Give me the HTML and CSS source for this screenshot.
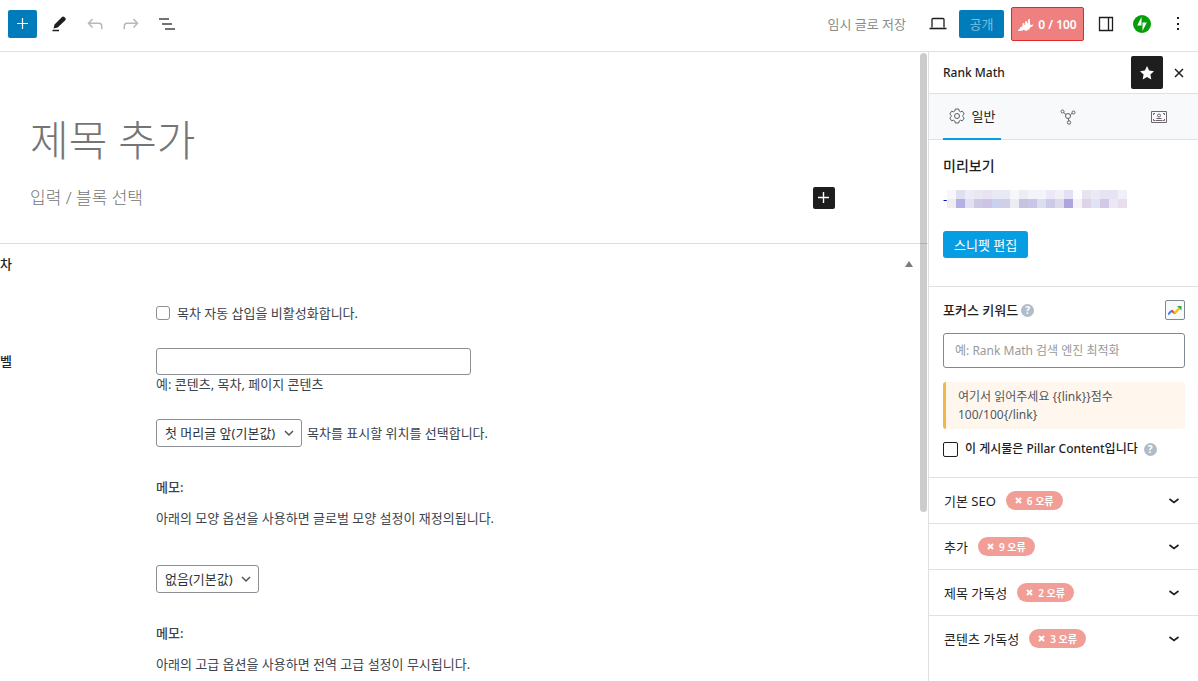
FILE: index.html
```html
<!DOCTYPE html>
<html lang="ko">

<head>
    <meta charset="UTF-8">
    <meta name="viewport" content="width=device-width, initial-scale=1.0">
    <title>새 글 추가</title>

    <link rel="stylesheet" href="styles.css">

</head>

<body>
    <header class="topbar">
        <div class="tools">
            <button class="add-btn" aria-label="블록 삽입">
                <svg width="24" height="24" viewBox="0 0 24 24"><path d="M11.500 6v11M6 11.500h11" stroke="#fff" stroke-width="1.200"/></svg>
            </button>
            <button class="icon-btn" aria-label="도구">
                <svg width="24" height="24" viewBox="0 0 24 24"><path d="M6.500 16.500l1-4 7.500-7.500a1.600 1.600 0 0 1 2.300 0l1 1a1.600 1.600 0 0 1 0 2.200l-7.600 7.300z" fill="#1e1e1e"/><path d="M5.500 18.500h6.500" stroke="#1e1e1e" stroke-width="1.500"/></svg>
            </button>
            <button class="icon-btn off" aria-label="실행 취소" disabled>
                <svg width="24" height="24" viewBox="0 0 24 24"><path d="M9.500 7l-4 4.200 4 4.200M5.500 11.200h10.500q2.700 0 2.700 3v3" /></svg>
            </button>
            <button class="icon-btn off" aria-label="다시 실행" disabled>
                <svg width="24" height="24" viewBox="0 0 24 24"><path d="M14.500 7l4 4.200-4 4.200M18.500 11.200h-10.500q-2.700 0-2.700 3v3" /></svg>
            </button>
            <button class="icon-btn" aria-label="문서 개요">
                <svg width="24" height="24" viewBox="0 0 24 24"><path d="M4 7h10M7 12h10M10 17h10" stroke="#444" stroke-width="1.600"/></svg>
            </button>
        </div>
        <div class="actions">
            <button class="draft">임시 글로 저장</button>
            <button class="icon-btn" aria-label="보기">
                <svg width="24" height="24" viewBox="0 0 24 24"><path d="M6 15.500v-8q0-1 1-1h10q1 0 1 1v8" fill="none" stroke="#1e1e1e" stroke-width="1.300"/><path d="M3.500 16.500h17" stroke="#1e1e1e" stroke-width="1.600"/></svg>
            </button>
            <button class="publish">공개</button>
            <button class="score">
                <svg width="16" height="14" viewBox="0 0 16 14"><path d="M0 12q2-1 2.500-3l2-.5V5.500l1.800-.5v2l.9-.3V3.500l2-.5v2.500l.8-.3V1.500l2-.5v6l3.500-.5q-.5 2-3 2.500-.5 2.500-3.500 3.500-2 .5-3-.7-1.500 1.200-6 1.200z" fill="#fff"/></svg>
                <span>0 / 100</span>
            </button>
            <button class="icon-btn" aria-label="설정">
                <svg width="24" height="24" viewBox="0 0 24 24"><path d="M5.500 5.500h13v13h-13zM14.500 5.500v13" fill="none" stroke="#1e1e1e" stroke-width="1.300"/></svg>
            </button>
            <button class="icon-btn" aria-label="Jetpack">
                <svg width="20" height="20" viewBox="0 0 20 20"><circle cx="10" cy="10" r="9" fill="#069e08"/><path d="M9.500 3v8.500h-4.300zM10.500 17v-8.500h4.300z" fill="#fff"/></svg>
            </button>
            <button class="icon-btn" aria-label="옵션">
                <svg width="24" height="24" viewBox="0 0 24 24"><path d="M11 5h2v2h-2zM11 11h2v2h-2zM11 16h2v2h-2z" fill="#1e1e1e"/></svg>
            </button>
        </div>
    </header>

    <div class="editor">
        <main class="content">
            <section class="canvas">
                <h1>제목 추가</h1>
                <div class="block-row">
                    <p>입력 / 블록 선택</p>
                    <button class="block-add" aria-label="블록 추가">
                        <svg width="22" height="22" viewBox="0 0 22 22"><path d="M10.500 5v11M5 10.500h11" stroke="#fff" stroke-width="1.400"/></svg>
                    </button>
                </div>
            </section>

            <section class="metabox">
                <div class="meta-head">
                    <h2>차</h2>
                    <button aria-label="접기"><svg width="8" height="6" viewBox="0 0 8 6"><path d="M4 0l4 6H0z" fill="#787c82"/></svg></button>
                </div>
                <div class="meta-row">
                    <span></span>
                    <label class="check"><input type="checkbox">목차 자동 삽입을 비활성화합니다.</label>
                </div>
                <div class="meta-row">
                    <label class="row-name" for="heading">벨</label>
                    <div>
                        <input type="text" id="heading" class="text-input">
                        <p class="desc">예: 콘텐츠, 목차, 페이지 콘텐츠</p>
                    </div>
                </div>
                <div class="meta-row">
                    <span></span>
                    <div class="select-line">
                        <select id="position" class="select"><option>첫 머리글 앞(기본값)</option></select>
                        <label for="position">목차를 표시할 위치를 선택합니다.</label>
                    </div>
                </div>
                <div class="meta-row">
                    <span></span>
                    <div class="memo">
                        <strong>메모:</strong>
                        <p>아래의 모양 옵션을 사용하면 글로벌 모양 설정이 재정의됩니다.</p>
                    </div>
                </div>
                <div class="meta-row">
                    <span></span>
                    <select class="select" aria-label="정렬"><option>없음(기본값)</option></select>
                </div>
                <div class="meta-row">
                    <span></span>
                    <div class="memo">
                        <strong>메모:</strong>
                        <p>아래의 고급 옵션을 사용하면 전역 고급 설정이 무시됩니다.</p>
                    </div>
                </div>
            </section>
            <div class="scroll-thumb"></div>
        </main>

        <aside class="sidebar">
            <div class="side-head">
                <h2>Rank Math</h2>
                <button class="star" aria-label="고정">
                    <svg width="24" height="24" viewBox="0 0 24 24"><path d="M12 5l2.100 4.600 4.900.6-3.600 3.400.9 4.900-4.300-2.400-4.300 2.400.9-4.900L5 10.200l4.900-.6z" fill="#fff"/></svg>
                </button>
                <button aria-label="닫기">
                    <svg width="10" height="10" viewBox="0 0 10 10"><path d="M1 1l8 8M9 1l-8 8" stroke="#1e1e1e" stroke-width="1.500"/></svg>
                </button>
            </div>

            <nav class="tabs">
                <button class="tab active">
                    <svg width="16" height="16" viewBox="0 0 16 16"><path d="M6.300 1h3.400l.5 2 1.300.8 2-.6 1.700 2.900-1.500 1.400v1l1.500 1.400-1.700 2.900-2-.6-1.300.8-.5 2H6.300l-.5-2-1.300-.8-2 .6L.8 9.900l1.500-1.400v-1L.8 6.100l1.700-2.900 2 .6L5.800 3z"/><circle cx="8" cy="8" r="2.500"/></svg>
                    일반
                </button>
                <button class="tab" aria-label="스키마">
                    <svg width="16" height="16" viewBox="0 0 16 16"><circle cx="2.500" cy="2.500" r="1.500"/><circle cx="13.500" cy="3.500" r="1.500"/><circle cx="8" cy="7" r="2.500"/><circle cx="9" cy="13.500" r="1.700"/><path d="M3.600 3.500L6 5.500M12.200 4.200L10.300 6M8.300 9.500l.4 2.300"/></svg>
                </button>
                <button class="tab social" aria-label="소셜">
                    <svg width="16" height="14" viewBox="0 0 16 14"><path d="M.5 1.500h15v11H.5zM2.500 5V3.500H4M12 3.500h1.500V5M2.500 9v1.500H4M12 10.500h1.500V9M4.500 10.500h7M5.500 8.500h5"/><circle cx="8" cy="5.500" r="1.500"/></svg>
                </button>
            </nav>

            <section class="preview">
                <h3>미리보기</h3>
                <div class="snippet">
                    <span>-</span>
                    <svg width="180" height="18" viewBox="0 0 20 2" preserveAspectRatio="none" shape-rendering="crispEdges" stroke-width="1">
                        <path d="M0 .5h1" stroke="#f7f6fc"/><path d="M1 .5h1" stroke="#dce0f1"/><path d="M2 .5h1" stroke="#ecebf6"/><path d="M3 .5h1" stroke="#e9e7f2"/><path d="M4 .5h1" stroke="#e9e2f1"/><path d="M5 .5h2" stroke="#e7e9f5"/><path d="M7 .5h1" stroke="#f6f7fb"/><path d="M8 .5h1" stroke="#ecedf2"/><path d="M9 .5h2" stroke="#f3f4f9"/><path d="M11 .5h1" stroke="#ebe9f7"/><path d="M12 .5h1" stroke="#f0f0f7"/><path d="M13 .5h1" stroke="#e3e0f4"/><path d="M14 .5h1" stroke="#fdfdfe"/><path d="M15 .5h1" stroke="#e7e3f1"/><path d="M16 .5h1" stroke="#eae9f5"/><path d="M17 .5h2" stroke="#e6e4f2"/><path d="M19 .5h1" stroke="#f2eff8"/>
                        <path d="M0 1.500h1" stroke="#efecf2"/><path d="M1 1.500h1" stroke="#b2b1e1"/><path d="M2 1.500h1" stroke="#e3e1f1"/><path d="M3 1.500h1" stroke="#cdc9e2"/><path d="M4 1.500h1" stroke="#cec2e5"/><path d="M5 1.500h1" stroke="#cad1ef"/><path d="M6 1.500h1" stroke="#cfd0e8"/><path d="M7 1.500h1" stroke="#eeebf2"/><path d="M8 1.500h1" stroke="#c4c4df"/><path d="M9 1.500h1" stroke="#cac5e7"/><path d="M10 1.500h1" stroke="#dadef1"/><path d="M11 1.500h1" stroke="#cfc9e9"/><path d="M12 1.500h1" stroke="#dddbea"/><path d="M13 1.500h1" stroke="#aea4df"/><path d="M14 1.500h1" stroke="#f7f2f9"/><path d="M15 1.500h1" stroke="#ddd4e8"/><path d="M16 1.500h1" stroke="#dfe3f3"/><path d="M17 1.500h1" stroke="#d3c8e6"/><path d="M18 1.500h1" stroke="#eae8f5"/><path d="M19 1.500h1" stroke="#e8deee"/>
                    </svg>
                </div>
                <button class="edit-snippet">스니펫 편집</button>
            </section>

            <section class="keyword">
                <div class="keyword-head">
                    <label for="focus">포커스 키워드</label>
                    <span class="help">?</span>
                    <button class="trends" aria-label="트렌드">
                        <svg width="14" height="12" viewBox="0 0 14 12" fill="none" stroke-width="2"><path d="M0 10.500l4-4" stroke="#4285f4"/><path d="M3.500 6.500l3.500 3" stroke="#ea4335"/><path d="M6.500 9.500l4.500-5" stroke="#fbbc04"/><path d="M9 2h4.500v4.500z" fill="#34a853"/></svg>
                    </button>
                </div>
                <input type="text" id="focus" class="focus-input" placeholder="예: Rank Math 검색 엔진 최적화">
                <p class="notice">여기서 읽어주세요 {{link}}점수 100/100{/link}</p>
                <div class="pillar">
                    <label><input type="checkbox">이 게시물은 Pillar Content입니다</label>
                    <span class="help">?</span>
                </div>
            </section>

            <button class="panel">기본 SEO <span class="badge"><svg width="7" height="7" viewBox="0 0 7 7"><path d="M1 1l5 5M6 1L1 6"/></svg>6 오류</span><svg class="chevron" width="12" height="8" viewBox="0 0 12 8"><path d="M1.500 2L6 5.500 10.500 2"/></svg></button>
            <button class="panel">추가 <span class="badge"><svg width="7" height="7" viewBox="0 0 7 7"><path d="M1 1l5 5M6 1L1 6"/></svg>9 오류</span><svg class="chevron" width="12" height="8" viewBox="0 0 12 8"><path d="M1.500 2L6 5.500 10.500 2"/></svg></button>
            <button class="panel">제목 가독성 <span class="badge"><svg width="7" height="7" viewBox="0 0 7 7"><path d="M1 1l5 5M6 1L1 6"/></svg>2 오류</span><svg class="chevron" width="12" height="8" viewBox="0 0 12 8"><path d="M1.500 2L6 5.500 10.500 2"/></svg></button>
            <button class="panel">콘텐츠 가독성 <span class="badge"><svg width="7" height="7" viewBox="0 0 7 7"><path d="M1 1l5 5M6 1L1 6"/></svg>3 오류</span><svg class="chevron" width="12" height="8" viewBox="0 0 12 8"><path d="M1.500 2L6 5.500 10.500 2"/></svg></button>
        </aside>
    </div>
</body>

</html>
```
FILE: styles.css
```css
* {
    box-sizing: border-box;
    margin: 0;
    padding: 0;
}

body {
    display: flex;
    flex-direction: column;
    height: 100vh;
    overflow: hidden;
    font-family: "Noto Sans", "Noto Sans CJK KR", sans-serif;
    font-size: 13px;
    line-height: 18px;
    color: #3c434a;
    background: #fff;
}

button,
input,
select {
    font: inherit;
    color: inherit;
}

button {
    display: flex;
    align-items: center;
    justify-content: center;
    border: 0;
    background: none;
}

/* top bar */
.topbar {
    display: flex;
    justify-content: space-between;
    flex-shrink: 0;
    height: 52px;
    padding: 0 8px;
    border-bottom: 1px solid #e0e0e0;
}

.tools,
.actions {
    display: flex;
    align-items: center;
    gap: 12px;
    height: 48px;
}

.add-btn {
    width: 29px;
    height: 28px;
    margin-right: -2px;
    border-radius: 2px;
    background: #007cba;
}

.icon-btn {
    width: 24px;
    height: 24px;
}

.off path {
    fill: none;
    stroke: #b8b8b8;
    stroke-width: 1.5;
}

.draft {
    margin-right: 8px;
    color: #8a8a8a;
}

.publish {
    width: 45px;
    height: 28px;
    margin-left: -3px;
    border-radius: 2px;
    color: #7fbddc;
    background: #007cba;
}

.score {
    gap: 4px;
    width: 73px;
    height: 34px;
    margin-left: -5px;
    margin-right: -2px;
    padding-top: 2px;
    border: 1px solid #e02a2a;
    border-radius: 2px;
    font-size: 12px;
    font-weight: 600;
    color: #fff;
    background: #ee8080;
}

/* layout */
.editor {
    display: flex;
    flex: 1;
    min-height: 0;
}

.content {
    position: relative;
    flex: 1;
    overflow: hidden;
}

.scroll-thumb {
    position: absolute;
    top: 1px;
    right: 1px;
    width: 7px;
    height: 459px;
    border-radius: 4px;
    background: rgba(0, 0, 0, .2);
}

.canvas {
    height: 192px;
    padding: 60px 93px 0 30px;
    border-bottom: 1px solid #ddd;
    font-weight: 300;
    color: #757575;
}

.canvas h1 {
    font-size: 42px;
    font-weight: 300;
    line-height: 56px;
}

.block-row {
    display: flex;
    align-items: center;
    justify-content: space-between;
    margin-top: 19px;
    font-size: 17px;
}

.block-add {
    width: 22px;
    height: 22px;
    border-radius: 2px;
    background: #1e1e1e;
}

/* meta box */
.meta-head {
    display: flex;
    align-items: center;
    justify-content: space-between;
    height: 39px;
    padding-right: 15px;
}

.meta-head h2 {
    font-size: 13px;
    font-weight: 500;
    color: #1d2327;
}

.meta-row {
    display: grid;
    grid-template-columns: 156px 1fr;
    justify-items: start;
    margin-bottom: 26px;
}

.meta-head + .meta-row {
    margin-top: 21px;
}

.row-name {
    margin-top: 4px;
    font-weight: 500;
    color: #1d2327;
}

.check {
    display: flex;
    align-items: center;
    gap: 7px;
}

input[type="checkbox"] {
    appearance: none;
    width: 14px;
    height: 14px;
    border: 1px solid #8c8f94;
    border-radius: 3px;
    background: #fff;
}

.text-input {
    display: block;
    width: 315px;
    height: 27px;
    padding: 0 8px;
    border: 1px solid #8c8f94;
    border-radius: 3px;
}

.select-line {
    display: flex;
    align-items: center;
    gap: 5px;
}

.select {
    appearance: none;
    height: 28px;
    padding: 0 25px 0 8px;
    border: 1px solid #8c8f94;
    border-radius: 3px;
    color: #2c3338;
    background: #fff url("data:image/svg+xml,%3Csvg xmlns='http://www.w3.org/2000/svg' width='10' height='7'%3E%3Cpath d='M1 1l4 4 4-4' fill='none' stroke='%23555' stroke-width='1.5'/%3E%3C/svg%3E") no-repeat right 7px center;
}

.memo {
    display: grid;
    gap: 13px;
    margin: 5px 0 12px;
}

.memo strong {
    font-weight: 500;
}

/* sidebar */
.sidebar {
    width: 270px;
    border-left: 1px solid #e0e0e0;
    color: #1e1e1e;
}

.side-head {
    display: flex;
    align-items: center;
    height: 42px;
    padding: 0 14px;
    border-bottom: 1px solid #e0e0e0;
}

.side-head h2 {
    flex: 1;
    font-size: 12px;
    font-weight: 500;
}

.star {
    width: 32px;
    height: 33px;
    margin-right: 11px;
    border-radius: 2px;
    background: #1e1e1e;
}

.tabs {
    display: flex;
    justify-content: space-between;
    height: 46px;
    padding: 0 14px;
    border-bottom: 1px solid #e0e0e0;
    background: #f8f9fa;
}

.tab {
    gap: 7px;
    width: 50px;
    height: 46px;
}

.tab.active {
    width: 58px;
    border-bottom: 2px solid #069de3;
}

.tab svg {
    fill: none;
    stroke: #5c6066;
}

.tab.social svg {
    stroke: #6e6670;
}

.preview {
    height: 147px;
    padding: 16px 14px 0;
    border-bottom: 1px solid #e0e0e0;
}

.preview h3 {
    font-size: 14px;
    font-weight: 500;
    line-height: 20px;
}

.snippet {
    display: flex;
    align-items: center;
    margin-top: 14px;
    color: #1a0dab;
}

.edit-snippet {
    height: 27px;
    margin-top: 23px;
    padding: 0 11px;
    border-radius: 3px;
    color: #fff;
    background: #069de3;
}

.keyword {
    height: 190px;
    padding: 13px 13px 0 14px;
}

.keyword-head {
    display: flex;
    align-items: center;
    gap: 3px;
    font-weight: 500;
}

.help {
    width: 13px;
    height: 13px;
    border-radius: 50%;
    font-size: 10px;
    font-weight: 700;
    line-height: 13px;
    text-align: center;
    color: #fff;
    background: #b0bcc8;
}

.trends {
    width: 20px;
    height: 20px;
    margin-left: auto;
    border: 1px solid #7e8993;
    border-radius: 2px;
    background: #f8f9fa;
}

.focus-input {
    width: 100%;
    height: 35px;
    margin-top: 13px;
    padding: 0 11px;
    border: 1px solid #7e8993;
    border-radius: 3px;
    font-size: 12px;
}

.focus-input::placeholder {
    color: #999;
}

.notice {
    margin-top: 14px;
    padding: 6px 36px 5px 12px;
    border-left: 3px solid #f0b849;
    border-radius: 3px;
    font-size: 12px;
    color: #50575e;
    background: #fff7ed;
}

.pillar {
    display: flex;
    align-items: center;
    gap: 6px;
    margin-top: 11px;
    font-size: 12px;
    font-weight: 500;
}

.pillar label {
    display: flex;
    align-items: center;
    gap: 7px;
}

.pillar input[type="checkbox"] {
    width: 15px;
    height: 15px;
    border-color: #1e1e1e;
    border-radius: 2px;
}

.panel {
    justify-content: flex-start;
    gap: 10px;
    width: 100%;
    height: 46px;
    padding: 0 18px 0 15px;
    border-top: 1px solid #e0e0e0;
}

.chevron {
    margin-left: auto;
    fill: none;
    stroke: #1e1e1e;
    stroke-width: 1.6;
}

.badge {
    display: flex;
    align-items: center;
    gap: 5px;
    height: 19px;
    padding: 0 9px;
    border-radius: 10px;
    font-size: 10px;
    font-weight: 600;
    color: #fff;
    background: #f29d96;
}

.badge svg {
    stroke: #fff;
    stroke-width: 2;
}
```
